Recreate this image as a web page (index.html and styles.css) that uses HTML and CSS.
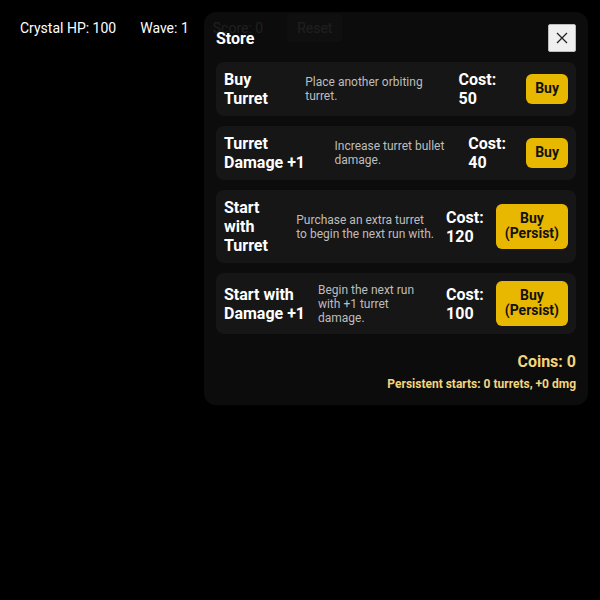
FILE: index.html
```html
<!DOCTYPE html>
<html>
<head>
<meta charset="utf-8">
<link rel="stylesheet" href="styles.css">
</head>
<body>
<div class="hud">
  <span>Crystal HP: 100</span>
  <span>Wave: 1</span>
  <span>Score: 0</span>
  <button class="reset">Reset</button>
</div>
<div class="modal">
  <div class="head">
    <h2>Store</h2>
    <button class="close" aria-label="Close">
      <svg width="14" height="14" viewBox="0 0 14 14"><path d="M2 2L12 12M12 2L2 12" stroke="#222" stroke-width="1.3" fill="none"/></svg>
    </button>
  </div>
  <div class="item">
    <div class="title">Buy Turret</div>
    <div class="desc">Place another orbiting turret.</div>
    <div class="cost">Cost: 50</div>
    <button class="buy">Buy</button>
  </div>
  <div class="item">
    <div class="title">Turret Damage +1</div>
    <div class="desc">Increase turret bullet damage.</div>
    <div class="cost">Cost: 40</div>
    <button class="buy">Buy</button>
  </div>
  <div class="item">
    <div class="title">Start with Turret</div>
    <div class="desc">Purchase an extra turret to begin the next run with.</div>
    <div class="cost">Cost: 120</div>
    <button class="buy">Buy (Persist)</button>
  </div>
  <div class="item">
    <div class="title">Start with Damage +1</div>
    <div class="desc">Begin the next run with +1 turret damage.</div>
    <div class="cost">Cost: 100</div>
    <button class="buy">Buy (Persist)</button>
  </div>
  <div class="foot">
    <div class="coins">Coins: 0</div>
    <div class="persist">Persistent starts: 0 turrets, +0 dmg</div>
  </div>
</div>
</body>
</html>
```
FILE: styles.css
```css
html, body {
  margin: 0;
  padding: 0;
  background: #000;
  width: 600px;
  height: 600px;
  overflow: hidden;
  font-family: Roboto, "Liberation Sans", sans-serif;
  color: #fff;
}
.hud {
  display: flex;
  align-items: center;
  gap: 24px;
  padding: 14px 20px;
  font-size: 14px;
  height: 28px;
}
.reset {
  font-family: inherit;
  font-size: 14px;
  color: #fff;
  background: #333;
  border: none;
  border-radius: 4px;
  padding: 6px 10px;
}
.modal {
  position: absolute;
  top: 12px;
  right: 12px;
  width: 360px;
  padding: 12px 12px 14px;
  background: rgba(13, 13, 13, 0.93);
  border-radius: 12px;
  display: flex;
  flex-direction: column;
  gap: 10px;
}
.head {
  display: flex;
  justify-content: space-between;
  align-items: center;
  height: 28px;
}
.head h2 {
  margin: 0;
  font-size: 16px;
  font-weight: 700;
  padding-top: 1px;
}
.close {
  width: 28px;
  height: 28px;
  padding: 0;
  background: #efefef;
  border: 1px solid #bbb;
  border-radius: 2px;
  display: flex;
  align-items: center;
  justify-content: center;
}
.item {
  display: flex;
  align-items: center;
  gap: 12px;
  padding: 8px;
  background: #161616;
  border-radius: 8px;
}
.title {
  font-size: 16px;
  font-weight: 700;
  line-height: 19px;
}
.desc {
  font-size: 12px;
  color: #bdbdbd;
}
.cost {
  font-size: 16px;
  font-weight: 700;
  line-height: 19px;
}
.buy {
  font-family: inherit;
  font-size: 14px;
  font-weight: 700;
  line-height: 15px;
  color: #111;
  background: #e8b700;
  border: none;
  border-radius: 6px;
  padding: 7px 9px 8px;
}
.foot {
  display: flex;
  flex-direction: column;
  align-items: flex-end;
  gap: 6px;
  margin-top: 8px;
}
.coins {
  font-size: 16px;
  font-weight: 700;
  color: #f3d57c;
}
.persist {
  font-size: 12px;
  font-weight: 700;
  color: #f3d57c;
}
```
